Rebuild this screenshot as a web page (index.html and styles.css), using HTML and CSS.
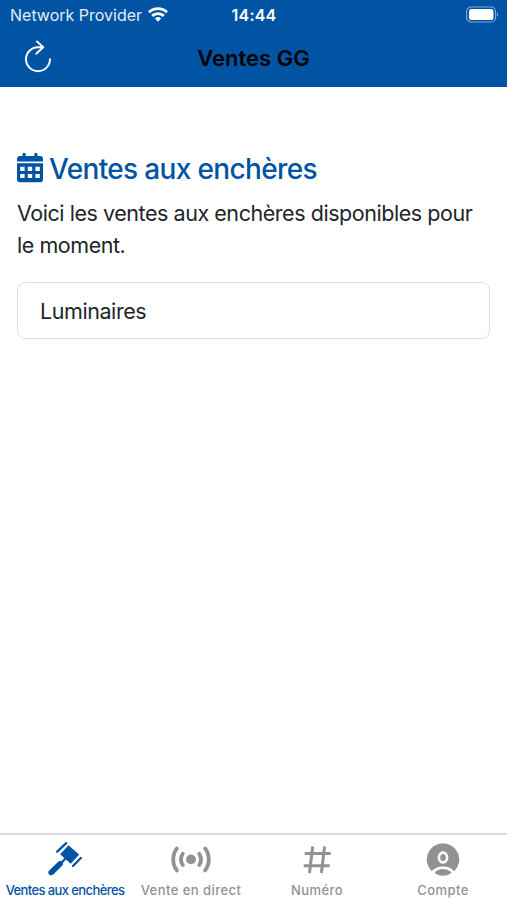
FILE: index.html
```html
<!doctype html>
<html lang="fr">
<head>
  <meta charset="utf-8" />
  <meta name="viewport" content="width=device-width,initial-scale=1" />
  <title>Ventes GG</title>
  <link rel="stylesheet" href="styles.css">
</head>
<body>
  <div class="app">
    <header class="top">
      <div class="status">
        <div class="carrier">
          <span class="network">Network Provider</span>
          <svg class="wifi" width="20" height="15" viewBox="0 0 20 15" fill="none" stroke="#fff" stroke-width="2.9">
            <path d="M1 5.2a13 13 0 0 1 18 0"/>
            <path d="M4.2 8.9a8.4 8.4 0 0 1 11.6 0"/>
            <path d="M10 14.8l-3.1-3.4a4.6 4.6 0 0 1 6.2 0z" fill="#fff" stroke="none"/>
          </svg>
        </div>
        <span class="time">14:44</span>
        <svg class="battery" width="34" height="17" viewBox="0 0 34 17">
          <rect x="1.6" y="1" width="29" height="15" rx="4.5" fill="none" stroke="#7fa9d3" stroke-width="1.2"/>
          <rect x="4" y="3" width="24.5" height="11" rx="2.5" fill="#fff"/>
          <path d="M32 6.5v4a2.3 2.3 0 0 0 0-4z" fill="#7fa9d3"/>
        </svg>
      </div>
      <div class="navbar">
        <button class="reload" type="button" aria-label="Actualiser">
          <svg width="28" height="34" viewBox="0 0 28 34" fill="none" stroke="#fff" stroke-width="1.9" stroke-linecap="round" stroke-linejoin="round">
            <path d="M26 19.2A12 12 0 1 1 14 7.2h5"/>
            <path d="M13 1.5l6.2 5.7-7 6.5"/>
          </svg>
        </button>
        <h1>Ventes GG</h1>
      </div>
    </header>

    <main>
      <h2>
        <svg class="calendar" width="26" height="30" viewBox="0 0 26 30" fill="currentColor">
          <path d="M3 3h2.500V1.400a1.500 1.500 0 0 1 3.200 0V3h8.600V1.400a1.500 1.500 0 0 1 3.200 0V3H23a3 3 0 0 1 3 3v2.600H0V6a3 3 0 0 1 3-3z"/>
          <path fill-rule="evenodd" d="M0 10.300h26v15.900a3 3 0 0 1-3 3H3a3 3 0 0 1-3-3zM3.200 13.700v4.200h4.400v-4.200zM10.800 13.700v4.200h4.400v-4.200zM18.400 13.700v4.200h4.400v-4.200zM3.200 20.900v4.200h4.400v-4.200zM10.800 20.900v4.200h4.400v-4.200zM18.400 20.900v4.200h4.400v-4.200z"/>
        </svg>
        <span>Ventes aux enchères</span>
      </h2>
      <p class="lead">Voici les ventes aux enchères disponibles pour le moment.</p>
      <a class="item" href="#"><span>Luminaires</span></a>
    </main>

    <nav class="tabs">
      <a class="tab active" href="#">
        <svg width="36" height="36" viewBox="0 0 36 36" fill="none" stroke="currentColor" stroke-width="2.3" stroke-linecap="round">
          <path d="M21.500 4.300l10.700 9.300-8.400 9.200-10.700-9.500z" fill="currentColor" stroke="none"/>
          <path d="M10.200 10.700l9-8.600"/>
          <path d="M26 25l7.800-8"/>
          <path d="M18.500 17.500l-4 4.200"/>
          <path d="M11.800 20.300q2-.8 3.400.6t.6 3.200L6.300 33.600c-2.800 2-6.200-.6-4.600-3.600z" fill="currentColor" stroke="none"/>
        </svg>
        <span>Ventes aux enchères</span>
      </a>
      <a class="tab" href="#">
        <svg width="40" height="36" viewBox="0 0 40 36" fill="none" stroke="currentColor" stroke-width="3.8" stroke-linecap="round">
          <circle cx="20" cy="18.4" r="4.9" fill="currentColor" stroke="none"/>
          <path d="M11.8 12.8c-2.300 3.400-2.300 7.800 0 11.200"/>
          <path d="M28.200 12.800c2.300 3.400 2.300 7.800 0 11.200"/>
          <path d="M5.900 7.400c-4.900 6.500-4.900 15.500 0 22"/>
          <path d="M34.100 7.400c4.900 6.500 4.900 15.500 0 22"/>
        </svg>
        <span>Vente en direct</span>
      </a>
      <a class="tab" href="#">
        <svg width="30" height="36" viewBox="0 0 30 36" fill="none" stroke="currentColor" stroke-width="3">
          <path d="M2.700 12.600h26M1.700 24.700h26M10.700 5.500L7.500 32M22.600 5.500L19.400 32"/>
        </svg>
        <span>Numéro</span>
      </a>
      <a class="tab" href="#">
        <svg width="34" height="36" viewBox="0 0 34 36">
          <path d="M17 2.200A16.300 16.300 0 0 0 5.700 30.200C8.200 27.300 12.200 25.400 17 25.400s8.800 1.900 11.300 4.800A16.300 16.300 0 0 0 17 2.200z" fill="currentColor"/>
          <ellipse cx="17" cy="16.500" rx="4.100" ry="4.900" fill="none" stroke="#fff" stroke-width="2.600"/>
          <path d="M8.500 31.700c3.500-5.100 13.500-5.100 17 0-4.300 3.900-12.700 3.900-17 0z" fill="currentColor"/>
        </svg>
        <span>Compte</span>
      </a>
    </nav>
  </div>
</body>
</html>
```

FILE: styles.css
```css
:root{--blue:#0054a3;--text:#212529;--muted:#929292;--line:#dedede}
*{box-sizing:border-box}
body{margin:0;background:#fff;color:var(--text);font-family:Inter,"Liberation Sans",sans-serif}
a{color:inherit;text-decoration:none}
svg{display:block;flex:none}
.app{display:flex;flex-direction:column;height:100vh}

.top{height:87px;background:var(--blue);color:#fff}
.status{display:grid;grid-template-columns:1fr auto 1fr;align-items:center;height:29px;padding:0 8px 0 9px}
.carrier{display:flex;align-items:center;gap:6px;padding-left:1px;white-space:nowrap}
.network{font-size:16px;color:#e3edf7}
.time{font-size:16px;font-weight:600;letter-spacing:.2px}
.battery{justify-self:end}
.navbar{display:grid;grid-template-columns:1fr auto 1fr;align-items:center;height:55px;padding:0 24px}
.reload{justify-self:start;padding:0;border:0;background:none;cursor:pointer}
h1{margin:2px 0 0;font-size:22px;font-weight:600;line-height:28px;color:#000}

main{flex:1;padding:65px 17px 0}
h2{display:flex;align-items:center;gap:6px;margin:0;font-size:28px;font-weight:500;line-height:34px;letter-spacing:-.65px;color:var(--blue);white-space:nowrap}
.calendar{margin-top:-2px}
.lead{margin:11px 0 21px;font-size:21.5px;line-height:32px;letter-spacing:-.45px}
.item{display:flex;align-items:center;height:57px;padding:0 22px;border:1.5px solid var(--line);border-radius:8px;font-size:21.5px;letter-spacing:-.43px}

.tabs{display:grid;grid-template-columns:repeat(4,126px);height:67px;padding-left:2px;border-top:2px solid #dadada}
.tab{display:flex;flex-direction:column;align-items:center;padding-top:6px;color:var(--muted);font-size:13px;font-weight:500;line-height:16px;letter-spacing:.45px;white-space:nowrap}
.tab span{margin-top:5px}
.active{color:var(--blue);letter-spacing:-.6px}
```
